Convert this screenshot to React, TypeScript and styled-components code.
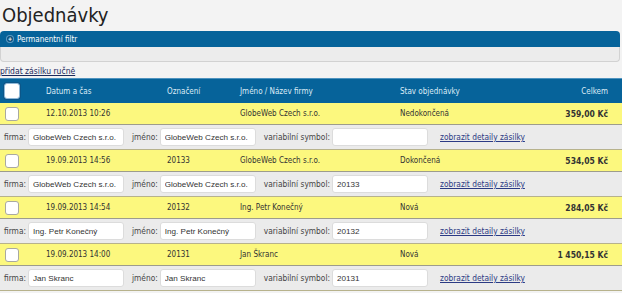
import styled, { createGlobalStyle } from 'styled-components'

const GlobalStyle = createGlobalStyle`
  body {
    margin: 0;
    background: #f3f3f3;
    font-family: "DejaVu Sans Condensed", "DejaVu Sans", sans-serif;
    font-stretch: condensed;
    color: #333;
  }
`

const Page = styled.div`
  width: 622px;
  height: 293px;
  overflow: hidden;
`

const Title = styled.h1`
  margin: 0;
  padding: 3px 0 0 2px;
  height: 31px;
  box-sizing: border-box;
  font-size: 20px;
  font-weight: normal;
  color: #222;
  line-height: 24px;
`

const FilterBar = styled.div`
  height: 16px;
  margin-right: 2px;
  background: #06639a;
  border-radius: 4px 4px 0 0;
  display: flex;
  align-items: center;
  padding-left: 7px;
  gap: 4px;
  color: #fff;
  font-size: 8px;
`

const PlusIcon = styled.span`
  width: 6px;
  height: 6px;
  border-radius: 50%;
  background: #0b4f7c;
  box-shadow: 0 0 0 1px #5f9cc4;
  color: #fff;
  font-size: 6px;
  line-height: 6px;
  text-align: center;
  font-weight: bold;
`

const FilterBody = styled.div`
  height: 14px;
  margin-right: 2px;
  background: #ececec;
  border: 1px solid #d2d2d2;
  border-top: none;
  border-radius: 0 0 4px 4px;
`

const AddLink = styled.a`
  display: block;
  margin-top: 3px;
  height: 13px;
  font-size: 8.5px;
  line-height: 12px;
  color: #1c2a5c;
  text-decoration: underline;
`

const columns = '46px 121px 73px 160px 1fr 90px'

const HeaderRow = styled.div`
  display: grid;
  grid-template-columns: ${columns};
  align-items: center;
  box-sizing: border-box;
  height: 25px;
  padding-right: 14px;
  background: #06639a;
  border-top: 1px solid #4f93bf;
  color: #dcebf6;
  font-size: 8px;
  font-weight: bold;
`

const OrderRow = styled.div`
  display: grid;
  grid-template-columns: ${columns};
  align-items: center;
  box-sizing: border-box;
  height: 22px;
  padding-right: 14px;
  background: #fcf87e;
  border-bottom: 1px solid #9d9c8c;
  font-size: 8px;
  color: #333;
`

const Cell = styled.div<{ $right?: boolean; $bold?: boolean }>`
  white-space: nowrap;
  text-align: ${(p) => (p.$right ? 'right' : 'left')};
  font-weight: ${(p) => (p.$bold ? 'bold' : 'normal')};
  font-size: ${(p) => (p.$bold ? '8.5px' : '8px')};
`

const Check = styled.span<{ $head?: boolean }>`
  display: block;
  box-sizing: border-box;
  margin-left: ${(p) => (p.$head ? '4px' : '5px')};
  width: ${(p) => (p.$head ? '16px' : '14px')};
  height: ${(p) => (p.$head ? '16px' : '14px')};
  background: #fff;
  border: 1px solid ${(p) => (p.$head ? '#8fb9d8' : '#a9a9a0')};
  border-radius: 3px;
  box-shadow: ${(p) => (p.$head ? '0 0 0 1px #0d5688' : 'none')};
`

const DetailRow = styled.div`
  display: flex;
  align-items: center;
  box-sizing: border-box;
  height: 25px;
  padding-left: 4px;
  background: #ebebeb;
  border-bottom: 1px solid #b7b28c;
  font-size: 8.3px;
  color: #444;
`

const Label = styled.span`
  margin-right: 2px;
  white-space: nowrap;
`

const Field = styled.input`
  box-sizing: border-box;
  width: 96px;
  height: 18px;
  margin-right: 8px;
  padding: 0 4px;
  border: 1px solid #dcdcdc;
  border-radius: 3px;
  background: #fff;
  font-family: "Liberation Sans", Arial, sans-serif;
  font-size: 8.1px;
  color: #333;
  outline: none;
`

const DetailLink = styled.a`
  margin-left: 4px;
  color: #2b3a84;
  text-decoration: underline;
  white-space: nowrap;
`

type Order = {
  date: string
  code: string
  name: string
  state: string
  total: string
  firm: string
  person: string
}

const orders: Order[] = [
  { date: '12.10.2013 10:26', code: '', name: 'GlobeWeb Czech s.r.o.', state: 'Nedokončená', total: '359,00 Kč', firm: 'GlobeWeb Czech s.r.o.', person: 'GlobeWeb Czech s.r.o.' },
  { date: '19.09.2013 14:56', code: '20133', name: 'GlobeWeb Czech s.r.o.', state: 'Dokončená', total: '534,05 Kč', firm: 'GlobeWeb Czech s.r.o.', person: 'GlobeWeb Czech s.r.o.' },
  { date: '19.09.2013 14:54', code: '20132', name: 'Ing. Petr Konečný', state: 'Nová', total: '284,05 Kč', firm: 'Ing. Petr Konečný', person: 'Ing. Petr Konečný' },
  { date: '19.09.2013 14:00', code: '20131', name: 'Jan Škranc', state: 'Nová', total: '1 450,15 Kč', firm: 'Jan Skranc', person: 'Jan Skranc' },
]

export default function App() {
  return (
    <Page>
      <GlobalStyle />
      <Title>Objednávky</Title>
      <FilterBar>
        <PlusIcon>+</PlusIcon>
        Permanentní filtr
      </FilterBar>
      <FilterBody />
      <AddLink>přidat zásilku ručně</AddLink>
      <HeaderRow>
        <Check $head />
        <Cell>Datum a čas</Cell>
        <Cell>Označení</Cell>
        <Cell>Jméno / Název firmy</Cell>
        <Cell>Stav objednávky</Cell>
        <Cell $right>Celkem</Cell>
      </HeaderRow>
      {orders.map((o) => (
        <div key={o.date}>
          <OrderRow>
            <Check />
            <Cell>{o.date}</Cell>
            <Cell>{o.code}</Cell>
            <Cell>{o.name}</Cell>
            <Cell>{o.state}</Cell>
            <Cell $right $bold>{o.total}</Cell>
          </OrderRow>
          <DetailRow>
            <Label>firma:</Label>
            <Field defaultValue={o.firm} />
            <Label>jméno:</Label>
            <Field defaultValue={o.person} />
            <Label>variabilní symbol:</Label>
            <Field defaultValue={o.code} />
            <DetailLink>zobrazit detaily zásilky</DetailLink>
          </DetailRow>
        </div>
      ))}
    </Page>
  )
}
